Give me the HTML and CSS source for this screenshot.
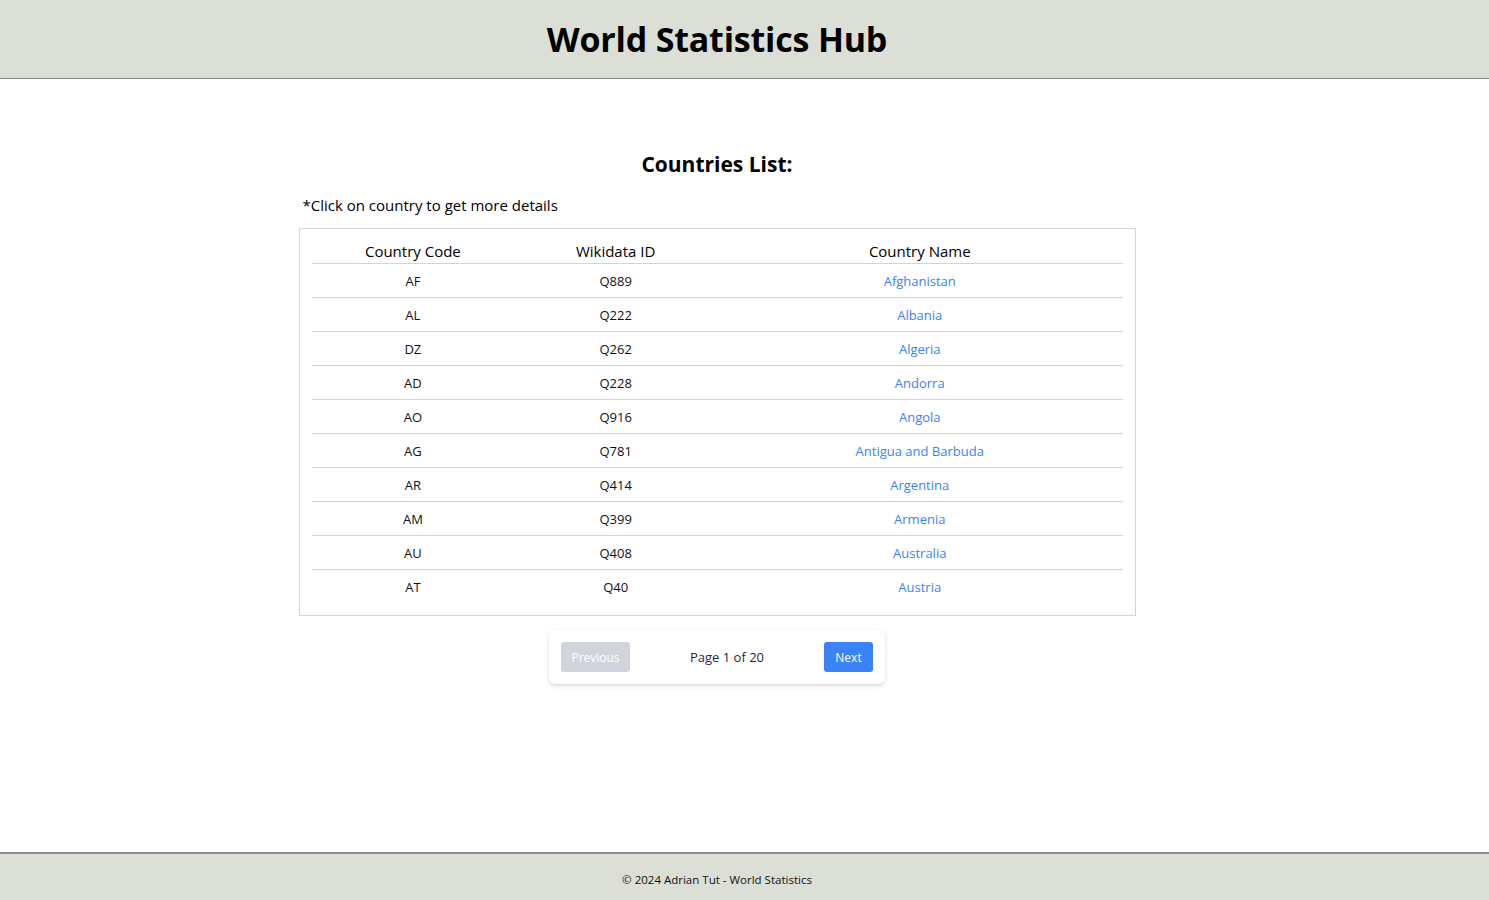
FILE: index.html
```html
<!DOCTYPE html>
<html lang="en">
<head>
<meta charset="utf-8">
<title>World Statistics Hub</title>
<link rel="stylesheet" href="styles.css">
</head>
<body>
<div class="page">
  <header class="site-header">
    <h1 class="site-title">World Statistics Hub</h1>
  </header>
  <main class="main">
    <section class="countries">
      <h2 class="countries-title">Countries List:</h2>
      <p class="hint">*Click on country to get more details</p>
      <div class="table-box">
        <table class="table">
          <thead>
            <tr><th class="c1">Country Code</th><th class="c2">Wikidata ID</th><th class="c3">Country Name</th></tr>
          </thead>
          <tbody>
            <tr><td>AF</td><td>Q889</td><td><a href="#">Afghanistan</a></td></tr>
            <tr><td>AL</td><td>Q222</td><td><a href="#">Albania</a></td></tr>
            <tr><td>DZ</td><td>Q262</td><td><a href="#">Algeria</a></td></tr>
            <tr><td>AD</td><td>Q228</td><td><a href="#">Andorra</a></td></tr>
            <tr><td>AO</td><td>Q916</td><td><a href="#">Angola</a></td></tr>
            <tr><td>AG</td><td>Q781</td><td><a href="#">Antigua and Barbuda</a></td></tr>
            <tr><td>AR</td><td>Q414</td><td><a href="#">Argentina</a></td></tr>
            <tr><td>AM</td><td>Q399</td><td><a href="#">Armenia</a></td></tr>
            <tr><td>AU</td><td>Q408</td><td><a href="#">Australia</a></td></tr>
            <tr><td>AT</td><td>Q40</td><td><a href="#">Austria</a></td></tr>
          </tbody>
        </table>
      </div>
      <div class="pager">
        <button class="btn btn-prev" disabled>Previous</button>
        <span class="page-info">Page 1 of 20</span>
        <button class="btn btn-next">Next</button>
      </div>
    </section>
  </main>
  <footer class="site-footer">
    <p class="footer-text">© 2024 Adrian Tut - World Statistics</p>
  </footer>
</div>
</body>
</html>
```

FILE: styles.css
```css
* { box-sizing: border-box; }
html, body { margin: 0; padding: 0; }
body {
  font-family: "Open Sans", "Noto Sans", "Liberation Sans", sans-serif;
  color: #000;
  background: #fff;
}
.page {
  min-height: 900px;
  display: flex;
  flex-direction: column;
}
.site-header {
  height: 79px;
  background: #dcdfd6;
  border-bottom: 1px solid #8a8d90;
  display: flex;
  align-items: center;
  justify-content: center;
  padding-right: 55px;
}
.site-title {
  margin: 0;
  font-size: 34px;
  font-weight: 700;
  letter-spacing: -0.2px;
}
.main {
  flex: 1;
  display: flex;
  justify-content: center;
  padding-right: 55px;
}
.countries {
  width: 837px;
  padding-top: 69px;
  display: flex;
  flex-direction: column;
  align-items: center;
}
.countries-title {
  margin: 0;
  font-size: 21px;
  font-weight: 700;
  line-height: 32px;
}
.hint {
  align-self: stretch;
  margin: 14px 0 0;
  padding-left: 4px;
  font-size: 15px;
  line-height: 22px;
}
.table-box {
  align-self: stretch;
  margin-top: 12px;
  border: 1px solid #d4d4d8;
  padding: 10px 12px 12px;
}
.table {
  width: 100%;
  border-collapse: collapse;
  table-layout: fixed;
  font-size: 13px;
  color: #111;
}
.table th {
  font-weight: 400;
  font-size: 15px;
  height: 24px;
  line-height: 20px;
  padding: 0;
  vertical-align: middle;
  border-bottom: 1px solid #d4d4d8;
  color: #000;
}
.c1, .c2 { width: 25%; }
.c3 { width: 50%; }
.table td {
  text-align: center;
  height: 34px;
  padding: 1px 0 0;
  border-bottom: 1px solid #d4d4d8;
}
.table tbody tr:last-child td { border-bottom: none; }
.table a {
  color: #3b82f6;
  text-decoration: none;
}
.pager {
  margin-top: 14px;
  width: 336px;
  height: 54px;
  background: #fff;
  border-radius: 6px;
  box-shadow: 0 2px 5px rgba(0,0,0,0.12), 0 1px 2px rgba(0,0,0,0.06);
  display: flex;
  align-items: center;
  justify-content: space-between;
  padding: 0 12px;
}
.btn {
  font-family: inherit;
  border: none;
  border-radius: 3px;
  color: #fff;
  font-size: 12px;
  height: 30px;
  padding: 0;
}
.btn-prev { background: #d1d5db; width: 69px; }
.btn-next { background: #3b82f6; width: 49px; }
.page-info {
  font-size: 13px;
  color: #1f2937;
}
.site-footer {
  height: 48px;
  background: #dcdfd6;
  border-top: 2px solid #8a8d90;
  display: flex;
  align-items: center;
  justify-content: center;
  padding: 5px 55px 0 0;
}
.footer-text {
  margin: 0;
  font-size: 11.5px;
  color: #111;
}
```
